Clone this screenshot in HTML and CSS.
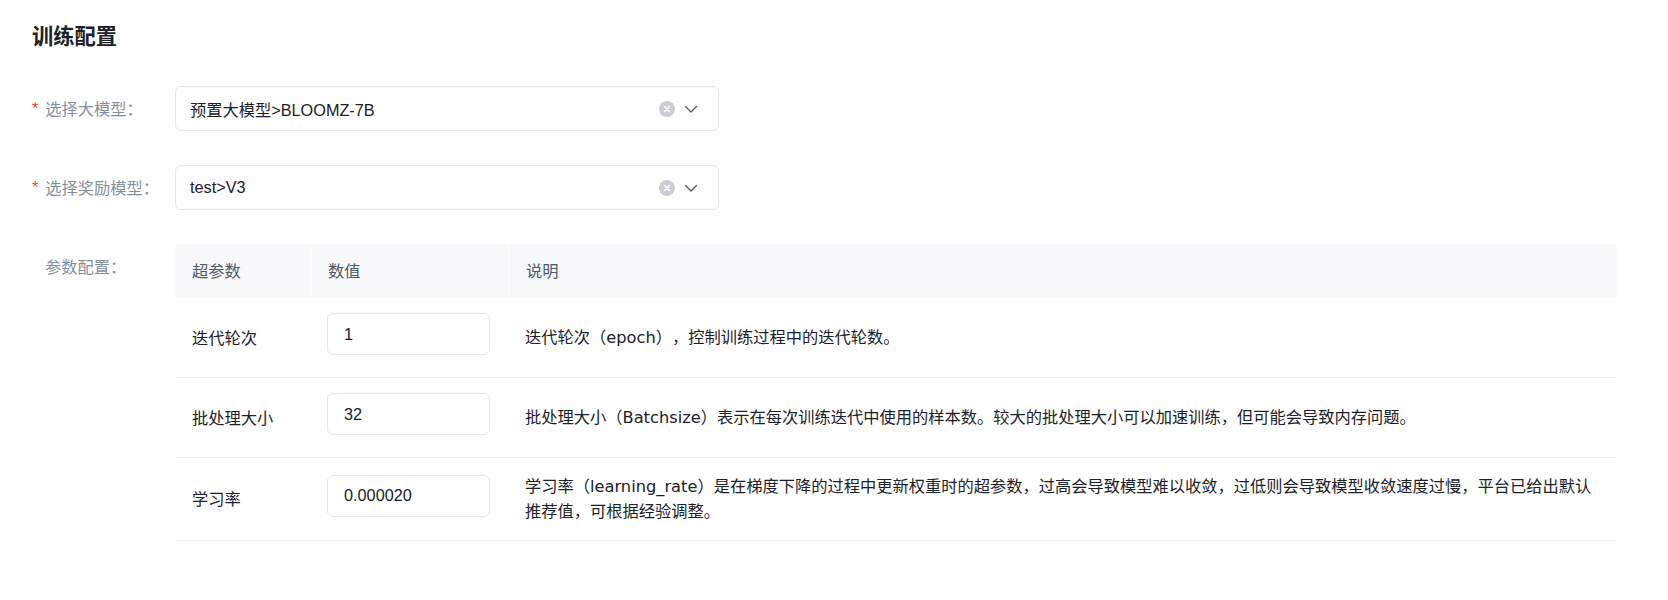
FILE: index.html
```html
<!DOCTYPE html>
<html lang="zh-CN">
<head>
  <meta charset="UTF-8">
  <meta name="viewport" content="width=device-width, initial-scale=1.0">
  <title>训练配置</title>
  <link rel="stylesheet" href="styles.css">
</head>
<body>

  <div class="page">
    <h3 class="section-title">训练配置</h3>

    <div class="form-item">
      <label class="form-label required">选择大模型：</label>
      <div class="select">
        <span class="select-value">预置大模型&gt;BLOOMZ-7B</span>
        <span class="select-clear">
          <svg width="16" height="16" viewBox="0 0 16 16"><circle cx="8" cy="8" r="8" fill="#c9cdd4"/><path d="M5.5 5.5l5 5M10.5 5.5l-5 5" stroke="#fff" stroke-width="1.5" stroke-linecap="round"/></svg>
        </span>
        <span class="select-arrow">
          <svg width="14" height="14" viewBox="0 0 14 14"><path d="M1.5 4.5L7 10l5.5-5.5" fill="none" stroke="#4e5969" stroke-width="1.3" stroke-linecap="round" stroke-linejoin="round"/></svg>
        </span>
      </div>
    </div>

    <div class="form-item">
      <label class="form-label required">选择奖励模型：</label>
      <div class="select">
        <span class="select-value">test&gt;V3</span>
        <span class="select-clear">
          <svg width="16" height="16" viewBox="0 0 16 16"><circle cx="8" cy="8" r="8" fill="#c9cdd4"/><path d="M5.5 5.5l5 5M10.5 5.5l-5 5" stroke="#fff" stroke-width="1.5" stroke-linecap="round"/></svg>
        </span>
        <span class="select-arrow">
          <svg width="14" height="14" viewBox="0 0 14 14"><path d="M1.5 4.5L7 10l5.5-5.5" fill="none" stroke="#4e5969" stroke-width="1.3" stroke-linecap="round" stroke-linejoin="round"/></svg>
        </span>
      </div>
    </div>

    <div class="form-item form-item-top">
      <label class="form-label">参数配置：</label>
      <table class="param-table">
        <colgroup>
          <col class="col-name">
          <col class="col-value">
          <col>
        </colgroup>
        <thead>
          <tr>
            <th>超参数</th>
            <th>数值</th>
            <th>说明</th>
          </tr>
        </thead>
        <tbody>
          <tr>
            <td>迭代轮次</td>
            <td class="value-cell"><input class="num-input" type="text" value="1"></td>
            <td class="desc-cell">迭代轮次（epoch），控制训练过程中的迭代轮数。</td>
          </tr>
          <tr>
            <td>批处理大小</td>
            <td class="value-cell"><input class="num-input" type="text" value="32"></td>
            <td class="desc-cell">批处理大小（Batchsize）表示在每次训练迭代中使用的样本数。较大的批处理大小可以加速训练，但可能会导致内存问题。</td>
          </tr>
          <tr>
            <td>学习率</td>
            <td class="value-cell"><input class="num-input" type="text" value="0.000020"></td>
            <td class="desc-cell">学习率（learning_rate）是在梯度下降的过程中更新权重时的超参数，过高会导致模型难以收敛，过低则会导致模型收敛速度过慢，平台已给出默认推荐值，可根据经验调整。</td>
          </tr>
        </tbody>
      </table>
    </div>
  </div>

</body>
</html>
```

FILE: styles.css
```css
body {
  margin: 0;
  background-color: #fff;
  font-family: "Liberation Sans", "Noto Sans CJK SC", sans-serif;
  font-size: 16.25px;
  color: #1d2129;
  text-spacing-trim: space-all;
}

.page {
  padding: 26px 51px 0 32px;
}

.section-title {
  margin: 0 0 38px;
  font-size: 21.25px;
  line-height: 22px;
  font-weight: bold;
  color: #1d2129;
}

.form-item {
  display: flex;
  align-items: center;
  margin-bottom: 34px;
}

.form-item-top {
  align-items: flex-start;
}

.form-label {
  width: 143px;
  flex-shrink: 0;
  padding-left: 13px;
  box-sizing: border-box;
  color: #86909c;
  line-height: 20px;
}

.form-label.required {
  padding-left: 0;
}

.form-label.required::before {
  content: "*";
  color: #f53f3f;
  margin-right: 7px;
  position: relative;
  top: -1px;
}

.form-item-top .form-label {
  padding-top: 13px;
}

.select {
  width: 544px;
  height: 45px;
  box-sizing: border-box;
  border: 1px solid #e5e6eb;
  border-radius: 6px;
  display: flex;
  align-items: center;
  padding: 0 20px 0 14px;
}

.select-value {
  flex: 1;
  color: #1d2129;
}

.select-clear {
  display: flex;
  margin-right: 9px;
}

.select-arrow {
  display: flex;
}

.param-table {
  flex: 1;
  border-collapse: separate;
  border-spacing: 0;
  table-layout: fixed;
}

.col-name {
  width: 135px;
}

.col-value {
  width: 198px;
}

.param-table th {
  background-color: #f7f8fa;
  color: #4e5969;
  font-weight: normal;
  text-align: left;
  padding: 16px 17px;
  line-height: 22px;
}

.param-table th + th {
  border-left: 1px solid #fff;
}

.param-table th:first-child {
  border-top-left-radius: 6px;
}

.param-table th:last-child {
  border-top-right-radius: 6px;
}

.param-table td {
  padding: 16px 17px;
  line-height: 22px;
  border-bottom: 1px solid #eceef1;
  color: #1d2129;
  vertical-align: middle;
}

.param-table td.value-cell {
  padding: 15px 17px 22px;
}

.param-table td.desc-cell {
  font-family: "DejaVu Sans", "Noto Sans CJK SC", sans-serif;
  line-height: 25px;
}

.num-input {
  width: 163px;
  height: 42px;
  box-sizing: border-box;
  border: 1px solid #e5e6eb;
  border-radius: 6px;
  padding: 0 16px;
  font-family: "Liberation Sans", "Noto Sans CJK SC", sans-serif;
  font-size: 16.25px;
  color: #1d2129;
  display: block;
  outline: none;
}
```
